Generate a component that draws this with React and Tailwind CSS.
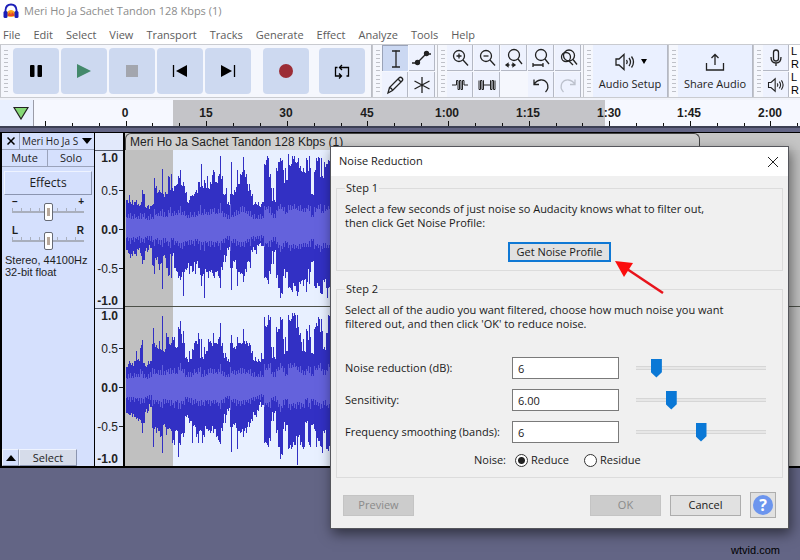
import { useState } from "react";

const MENUS = [
  "File",
  "Edit",
  "Select",
  "View",
  "Transport",
  "Tracks",
  "Generate",
  "Effect",
  "Analyze",
  "Tools",
  "Help",
];

// peak heights, one value for every two pixels
const LEFT_UP = [
  28, 33, 26, 28, 26, 28, 24, 26, 38, 34, 22, 23, 22, 24, 50, 42, 38, 36, 59,
  36, 34, 52, 54, 40, 42, 44, 52, 58, 46, 42, 36, 28, 32, 33, 36, 38, 46, 64,
  42, 48, 52, 40, 46, 58, 56, 46, 54, 72, 52, 34, 40, 26, 66, 34, 38, 58, 44,
  54, 71, 58, 54, 44, 38, 34, 26, 24, 26, 24, 26, 64, 72, 70, 54, 40, 28, 60,
  66, 70, 68, 60, 48, 74, 64, 72, 72, 66, 70, 62, 60, 56, 70, 72, 60, 34, 58,
  70, 71, 70, 52, 66, 64, 68, 70,
];
const LEFT_DOWN = [
  22, 26, 30, 28, 26, 28, 22, 28, 36, 32, 24, 22, 20, 38, 46, 32, 42, 36, 61,
  30, 40, 48, 50, 28, 40, 44, 50, 52, 68, 44, 42, 46, 38, 44, 46, 36, 40, 58,
  48, 70, 44, 50, 44, 48, 50, 44, 50, 60, 42, 34, 28, 22, 62, 40, 34, 58, 44,
  46, 54, 48, 44, 34, 40, 24, 22, 26, 18, 18, 18, 50, 52, 56, 46, 36, 24, 50,
  60, 70, 66, 50, 44, 60, 62, 64, 58, 68, 64, 56, 58, 52, 64, 56, 44, 34, 60,
  60, 58, 66, 66, 54, 70, 60, 62,
];
const RIGHT_UP = [
  20, 26, 24, 24, 26, 36, 28, 42, 47, 24, 22, 26, 26, 59, 44, 42, 46, 38, 71,
  38, 54, 50, 44, 50, 50, 40, 60, 66, 56, 44, 30, 36, 28, 38, 46, 46, 54, 48,
  30, 40, 36, 48, 46, 54, 44, 44, 50, 64, 44, 34, 30, 28, 52, 44, 40, 50, 44,
  44, 58, 46, 46, 44, 42, 36, 30, 26, 28, 34, 28, 70, 62, 72, 70, 40, 30, 60,
  58, 70, 68, 50, 36, 72, 68, 74, 74, 72, 60, 54, 48, 36, 58, 62, 50, 34, 60,
  64, 70, 68, 56, 40, 54, 72, 72,
];
const RIGHT_DOWN = [
  26, 28, 28, 30, 30, 32, 34, 36, 46, 36, 26, 24, 20, 60, 42, 46, 44, 50, 66,
  40, 48, 42, 44, 56, 58, 44, 70, 58, 50, 46, 30, 36, 34, 56, 40, 50, 56, 44,
  56, 50, 42, 44, 46, 46, 42, 50, 55, 57, 44, 36, 28, 24, 65, 40, 38, 62, 44,
  46, 50, 44, 46, 40, 36, 34, 28, 30, 24, 20, 18, 56, 58, 60, 54, 34, 26, 46,
  60, 72, 68, 44, 38, 62, 62, 60, 58, 78, 50, 58, 62, 60, 36, 58, 60, 38, 44,
  60, 54, 60, 66, 46, 62, 64, 60,
];

const RULER_LABELS = ["0", "15", "30", "45", "1:00", "1:15", "1:30", "1:45", "2:00"];

// splits every value into a one pixel peak and a one pixel shoulder
function columns(values, inner) {
  return values.flatMap((v, i) => {
    const next = values[i + 1] ?? v;
    const shoulder = Math.min(v, next) - ((i * 5) % 4);
    if (inner) {
      return [
        Math.round(5 + v * 0.22 + ((i * 7) % 5)),
        Math.round(4 + shoulder * 0.22),
      ];
    }
    return i % 3 === 1 ? [shoulder, v] : [v, shoulder];
  });
}

function wavePath(up, down, mid, inner) {
  const top = columns(up, inner);
  const bottom = columns(down, inner);
  let d = `M1 ${mid}`;
  top.forEach((v) => {
    d += `V${mid - v}h1`;
  });
  for (let i = bottom.length - 1; i >= 0; i--) {
    d += `V${mid + bottom[i]}h-1`;
  }
  return d + "Z";
}

function Icon({ children, className = "size-6" }) {
  return (
    <svg
      viewBox="0 0 24 24"
      className={className}
      fill="none"
      stroke="currentColor"
      strokeWidth="1.3"
      aria-hidden="true"
    >
      {children}
    </svg>
  );
}

function Grip() {
  return (
    <div className="flex w-2.5 shrink-0 flex-col items-center justify-evenly border-l border-[#c4c6cc] py-0.5">
      {Array.from({ length: 11 }, (_, i) => (
        <span key={i} className="h-px w-1 bg-[#bfc1c8]" />
      ))}
    </div>
  );
}

function TransportButton({ label, children }) {
  return (
    <button
      type="button"
      aria-label={label}
      className="flex size-[46px] shrink-0 items-center justify-center rounded-sm bg-[#cdd9f0] text-black"
    >
      {children}
    </button>
  );
}

function ToolButton({ label, active, children }) {
  return (
    <button
      type="button"
      aria-label={label}
      className={
        active
          ? "flex size-[26px] items-center justify-center border-t border-l border-[#9aa3b8] bg-[#cbd8f2] text-[#222]"
          : "flex size-[26px] items-center justify-center border-r border-b border-[#b4b8c4] bg-[#eef2fe] text-[#222]"
      }
    >
      {children}
    </button>
  );
}

const MAGNIFIER = (
  <>
    <circle cx="11" cy="10" r="5.5" />
    <path d="M15 14l5 5.500" />
  </>
);

function SpeakerShape() {
  return (
    <>
      <path d="M3 9h3l5-4.500v15L6 15H3z" />
      <path d="M13.500 10q1.500 2 0 4M16 8q3 4 0 8M18.500 6.500q4 5.500 0 11" />
    </>
  );
}

function Toolbar() {
  return (
    <div className="flex h-[54px] overflow-hidden border-t border-b border-[#c9cbd0] bg-[#f5f7fd]">
      <Grip />
      <div className="flex shrink-0 items-center gap-0.5 border-r border-[#b9bcc4] pr-1.5 pl-[3px]">
        <TransportButton label="Pause">
          <Icon>
            <rect x="6" y="6" width="4.500" height="12" rx="1" fill="currentColor" stroke="none" />
            <rect x="13.500" y="6" width="4.500" height="12" rx="1" fill="currentColor" stroke="none" />
          </Icon>
        </TransportButton>
        <TransportButton label="Play">
          <Icon>
            <path d="M5 5l14 7-14 7z" fill="#43896b" stroke="none" />
          </Icon>
        </TransportButton>
        <TransportButton label="Stop">
          <Icon>
            <path d="M6 6h12v12H6z" fill="#a3a6ae" stroke="none" />
          </Icon>
        </TransportButton>
        <TransportButton label="Skip to Start">
          <Icon>
            <path d="M19 6v12L8 12z" fill="currentColor" stroke="none" />
            <path d="M5.500 6v12" />
          </Icon>
        </TransportButton>
        <TransportButton label="Skip to End">
          <Icon>
            <path d="M5 6v12l11-6z" fill="currentColor" stroke="none" />
            <path d="M18.500 6v12" />
          </Icon>
        </TransportButton>
        <span className="w-2" />
        <TransportButton label="Record">
          <Icon>
            <circle cx="12" cy="12" r="7" fill="#9c2d36" stroke="none" />
          </Icon>
        </TransportButton>
        <span className="w-1.5" />
        <TransportButton label="Enable Looping">
          <Icon>
            <path d="M7.500 8.500h-2v8.500h6M9 14.500l2.500 2.500L9 19.500M16.500 17h2V8.500H9.500M12 6L9.500 8.500 12 11" />
          </Icon>
        </TransportButton>
      </div>
      <Grip />
      <div className="grid shrink-0 grid-cols-2 gap-px pr-0.5">
        <ToolButton label="Selection Tool" active>
          <Icon>
            <path d="M8 4h3.500l.5.5.5-.5H16M12 4.500v15M8 20h3.500l.5-.5.5.5H16" />
          </Icon>
        </ToolButton>
        <ToolButton label="Envelope Tool">
          <Icon>
            <path d="M2 17h5l9-9h5" />
            <circle cx="7.500" cy="16.500" r="2" fill="currentColor" />
            <circle cx="16.500" cy="7.500" r="2" fill="currentColor" />
          </Icon>
        </ToolButton>
        <ToolButton label="Draw Tool">
          <Icon>
            <path d="M5 20l1.500-5.500L16 5q1.500-1.500 3 0t0 3L9.500 17.500zM6.500 14.500q2.500.5 3 3M15 6l3 3" />
          </Icon>
        </ToolButton>
        <ToolButton label="Multi-Tool">
          <Icon>
            <path d="M12 4v16M4.500 8l15 8M4.500 16l15-8" />
          </Icon>
        </ToolButton>
      </div>
      <Grip />
      <div className="grid shrink-0 grid-cols-5 gap-px pr-0.5">
        <ToolButton label="Zoom In">
          <Icon>
            {MAGNIFIER}
            <path d="M11 7.500v5M8.500 10h5" />
          </Icon>
        </ToolButton>
        <ToolButton label="Zoom Out">
          <Icon>
            {MAGNIFIER}
            <path d="M8.500 10h5" />
          </Icon>
        </ToolButton>
        <ToolButton label="Fit Selection to Width">
          <Icon>
            <circle cx="12" cy="9" r="5.500" />
            <path d="M16 13l4 5M4 19h3.500M9.500 19H13M6 17.500L4 19l2 1.500zM11 17.500l2 1.500-2 1.500z" />
          </Icon>
        </ToolButton>
        <ToolButton label="Fit Project to Width">
          <Icon>
            <circle cx="12" cy="9" r="5.500" />
            <path d="M16 13l4 5M4 19h10M4 17v4M14 17v4" />
          </Icon>
        </ToolButton>
        <ToolButton label="Zoom Toggle">
          <Icon>
            <circle cx="13" cy="9.500" r="5.500" />
            <circle cx="10" cy="11" r="4.500" />
            <path d="M13 15l4 4M17 13.500l4 5" />
          </Icon>
        </ToolButton>
        <ToolButton label="Trim Audio">
          <Icon>
            <path strokeWidth="1" d="M4 12h4.500V7.500h1.500v9h1.500v-9h1.500v9h1.500v-9h1.500V12H20" />
          </Icon>
        </ToolButton>
        <ToolButton label="Silence Audio">
          <Icon>
            <path strokeWidth="1" d="M4 7.500v9h1.500v-9H7v9h1.500v-9V12h7V7.500v9H17v-9h1.500v9H20v-9" />
          </Icon>
        </ToolButton>
        <span />
        <ToolButton label="Undo">
          <Icon>
            <path d="M5 6.500v5h5M5 11.500C8 6 15 5.500 18 10q2.500 5-1.500 9" />
          </Icon>
        </ToolButton>
        <button
          type="button"
          disabled
          aria-label="Redo"
          className="flex size-[26px] items-center justify-center border-r border-b border-[#b4b8c4] bg-[#eef2fe] text-[#bcc1cc]"
        >
          <Icon>
            <path d="M19 6.500v5h-5M19 11.500C16 6 9 5.500 6 10q-2.500 5 1.500 9" />
          </Icon>
        </button>
      </div>
      <Grip />
      <button
        type="button"
        className="flex w-[75px] shrink-0 flex-col items-center justify-center gap-0.5 border-r border-[#b4b8c4] bg-[#eaf0ff] text-[#222]"
      >
        <span className="flex items-center gap-1">
          <Icon>
            <SpeakerShape />
          </Icon>
          <svg viewBox="0 0 6 5" className="h-[5px] w-1.5" aria-hidden="true">
            <path d="M0 0h6L3 5z" />
          </svg>
        </span>
        Audio Setup
      </button>
      <Grip />
      <button
        type="button"
        className="flex w-[75px] shrink-0 flex-col items-center justify-center gap-0.5 border-r border-[#b4b8c4] bg-[#eaf0ff] text-[#222]"
      >
        <Icon>
          <path d="M3.500 13v7h17v-7M12 15V4.500M8.500 8L12 4.500 15.500 8" />
        </Icon>
        Share Audio
      </button>
      <Grip />
      <div className="grid shrink-0 gap-px">
        <ToolButton label="Record Meter">
          <Icon>
            <rect x="9.500" y="4" width="5" height="11" rx="2.500" />
            <path d="M7 11q0 6 5 6t5-6M12 17v3" />
          </Icon>
        </ToolButton>
        <ToolButton label="Playback Meter">
          <Icon className="size-5">
            <SpeakerShape />
          </Icon>
        </ToolButton>
      </div>
      <div className="flex flex-1 flex-col justify-between bg-white pl-0.5 font-['Liberation_Sans',sans-serif] leading-[13px]">
        <span>L</span>
        <span>R</span>
        <span>L</span>
        <span>R</span>
      </div>
    </div>
  );
}

function TimeRuler() {
  return (
    <div className="mt-0.5 flex h-7 border-b-2 border-[#3c4054] bg-[#f6f8ff]">
      <div className="flex w-[34px] shrink-0 items-center justify-end border-r border-[#9a9ca8] bg-[#e9f0ff] pr-1">
        <svg viewBox="0 0 16 14" className="h-3.5 w-4" aria-hidden="true">
          <path d="M1 1.500h14L8 13z" fill="#85d977" stroke="#222" strokeWidth="1.2" />
        </svg>
      </div>
      <svg className="h-full min-w-0 flex-1" aria-label="Timeline">
        <rect x="139" y="0" width="432" height="27" fill="#c4c4c8" />
        {Array.from({ length: 32 }, (_, i) => (
          <path
            key={i}
            d={`M${Math.round(11 + i * 26.87) + 0.5} ${i % 3 === 0 ? 21 : 23}V27`}
            stroke="#111"
          />
        ))}
        {RULER_LABELS.map((label, i) => (
          <text
            key={label}
            x={Math.round(91 + i * 80.6)}
            y="17"
            textAnchor="middle"
            className="fill-[#1c1c1c] font-['Liberation_Sans',sans-serif] text-xs font-bold"
          >
            {label}
          </text>
        ))}
      </svg>
    </div>
  );
}

function TrackSlider({ label, low, high }) {
  return (
    <div className="px-2.5">
      <div className="flex h-2.5 justify-between font-['Liberation_Sans',sans-serif] text-[10px] leading-[10px] font-bold">
        <span>{low}</span>
        <span>{high}</span>
      </div>
      <input
        type="range"
        aria-label={label}
        min="-36"
        max="36"
        defaultValue="0"
        className="-mt-1 block h-[18px] w-full appearance-none bg-[linear-gradient(#a9afbd,#a9afbd),repeating-linear-gradient(90deg,#a9afbd_0_1px,transparent_1px_9px)] bg-[length:100%_2px,100%_5px] bg-[position:0_8px,0_5px] bg-no-repeat [&::-webkit-slider-thumb]:h-[18px] [&::-webkit-slider-thumb]:w-[9px] [&::-webkit-slider-thumb]:appearance-none [&::-webkit-slider-thumb]:rounded-xs [&::-webkit-slider-thumb]:border [&::-webkit-slider-thumb]:border-[#666a75] [&::-webkit-slider-thumb]:bg-[linear-gradient(#b9a99c,#b9a99c)] [&::-webkit-slider-thumb]:bg-[length:3px_8px] [&::-webkit-slider-thumb]:bg-center [&::-webkit-slider-thumb]:bg-no-repeat [&::-webkit-slider-thumb]:bg-white"
      />
    </div>
  );
}

function TrackPanel() {
  return (
    <div className="flex w-[92px] shrink-0 flex-col bg-[#d5e0fd] text-[#1d1d1d]">
      <div className="flex h-[17px] items-center border-b border-[#9aa3bb]">
        <button type="button" aria-label="Close track" className="flex h-full w-[18px] items-center justify-center border-r border-[#9aa3bb]">
          <svg viewBox="0 0 8 8" className="size-2" aria-hidden="true">
            <path d="M.5.5l7 7M7.500.5l-7 7" stroke="#000" strokeWidth="1.500" />
          </svg>
        </button>
        <button type="button" className="flex flex-1 items-center justify-between px-0.5 text-[10px] whitespace-nowrap">
          Meri Ho Ja S
          <svg viewBox="0 0 10 6" className="h-1.5 w-2.5" aria-hidden="true">
            <path d="M0 0h10L5 6z" />
          </svg>
        </button>
      </div>
      <div className="grid h-[17px] grid-cols-2 border-b border-[#9aa3bb]">
        <button type="button" className="border-r border-[#9aa3bb]">Mute</button>
        <button type="button">Solo</button>
      </div>
      <button
        type="button"
        className="mx-0.5 mt-1 h-6 border border-t-[#eef3ff] border-r-[#8b95b0] border-b-[#8b95b0] border-l-[#eef3ff] text-xs"
      >
        Effects
      </button>
      <div className="mt-0.5 space-y-[5px]">
        <TrackSlider label="Gain" low="–" high="+" />
        <TrackSlider label="Pan" low="L" high="R" />
      </div>
      <p className="mt-1 pl-[3px] font-['Liberation_Sans',sans-serif] text-[11px] leading-3 whitespace-nowrap">
        Stereo, 44100Hz
        <br />
        32-bit float
      </p>
      <div className="mt-auto flex h-[17px] text-[11px]">
        <button type="button" aria-label="Collapse track" className="flex w-[17px] items-center justify-center border border-t-[#eef3ff] border-r-[#9aa3bb] border-b-[#9aa3bb] border-l-[#eef3ff]">
          <svg viewBox="0 0 10 6" className="h-1.5 w-2.5" aria-hidden="true">
            <path d="M0 6h10L5 0z" />
          </svg>
        </button>
        <button type="button" className="w-[58px] border border-t-[#eef3ff] border-r-[#8b95b0] border-b-[#8b95b0] border-l-[#eef3ff] bg-[#d6dcea] leading-[15px]">
          Select
        </button>
      </div>
    </div>
  );
}

function ScaleMark({ children }) {
  return (
    <span className="flex flex-1 items-center justify-end gap-px">
      {children}
      <i className="h-px w-1 bg-[#222]" />
    </span>
  );
}

function ScaleColumn() {
  return (
    <div className="flex h-[158px] flex-col border-t border-[#555b6b] font-['Liberation_Sans',sans-serif] text-xs leading-[14px] text-[#222]">
      <span className="flex h-5 justify-end pr-[5px] font-bold">1.0</span>
      <ScaleMark>0.5</ScaleMark>
      <ScaleMark>
        <b>0.0</b>
      </ScaleMark>
      <ScaleMark>-0.5</ScaleMark>
      <span className="flex h-5 items-end justify-end pr-[5px] font-bold">-1.0</span>
    </div>
  );
}

function Waveform() {
  return (
    <svg className="h-[316px] w-full" shapeRendering="crispEdges" aria-label="Waveform">
      <rect width="100%" height="316" fill="#c0c0c0" />
      <rect x="48" width="527" height="316" fill="#e8f0ff" />
      <path d={wavePath(LEFT_UP, LEFT_DOWN, 78)} fill="#3230c4" />
      <path d={wavePath(LEFT_UP, LEFT_DOWN, 78, true)} fill="#6462dc" />
      <path d={wavePath(RIGHT_UP, RIGHT_DOWN, 237)} fill="#3230c4" />
      <path d={wavePath(RIGHT_UP, RIGHT_DOWN, 237, true)} fill="#6462dc" />
      <rect y="156" width="100%" height="1" fill="#4d5149" />
    </svg>
  );
}

function Track() {
  return (
    <section className="mt-1 flex h-[336px] border-t border-b-2 border-l-2 border-black bg-[#c6c6c6]">
      <TrackPanel />
      <div className="flex w-[31px] shrink-0 flex-col border-r-2 border-l border-black bg-[#e2e9fb] pt-[17px]">
        <ScaleColumn />
        <ScaleColumn />
      </div>
      <div className="min-w-0 flex-1">
        <div className="h-[17px] w-[575px] rounded-t-md border border-b-0 border-[#444] bg-[#cfcfcf] pl-1 font-['Liberation_Sans',sans-serif] text-xs leading-4 text-[#222]">
          Meri Ho Ja Sachet Tandon 128 Kbps (1)
        </div>
        <Waveform />
      </div>
    </section>
  );
}

function SettingRow({ id, label, max, step, value, onChange }) {
  return (
    <div className="flex items-center">
      <label htmlFor={id} className="w-[167px]">
        {label}
      </label>
      <input
        id={id}
        type="text"
        value={value}
        onChange={(e) => onChange(e.target.value)}
        className="h-[22px] w-[107px] border border-[#7a7a7a] bg-white px-[5px] outline-none"
      />
      <input
        type="range"
        aria-label={label}
        min="0"
        max={max}
        step={step}
        value={value}
        onChange={(e) => onChange(e.target.value)}
        className="ml-[17px] h-5 w-[130px] appearance-none bg-[linear-gradient(#d6d6d6_1px,#e7e7e7_1px_3px,#d6d6d6_3px)] bg-[length:100%_4px] bg-center bg-no-repeat [&::-webkit-slider-thumb]:h-[19px] [&::-webkit-slider-thumb]:w-[11px] [&::-webkit-slider-thumb]:appearance-none [&::-webkit-slider-thumb]:bg-[#0a78d6] [&::-webkit-slider-thumb]:[clip-path:polygon(0_0,100%_0,100%_72%,50%_100%,0_72%)]"
      />
    </div>
  );
}

function NoiseReductionDialog() {
  const [settings, setSettings] = useState({
    reduction: "6",
    sensitivity: "6.00",
    bands: "6",
    noise: "reduce",
  });

  const update = (key) => (value) =>
    setSettings((prev) => ({ ...prev, [key]: value }));

  const radioClass =
    "size-[13px] appearance-none rounded-full border border-[#333] bg-white checked:bg-[radial-gradient(circle,#222_3px,#fff_4px)]";

  return (
    <div
      role="dialog"
      aria-labelledby="dialog-title"
      className="absolute top-[146px] left-[330px] w-[459px] border border-[#55565c] bg-[#f0f0f0] text-[#1a1a1a] shadow-[2px_5px_12px_rgba(0,0,0,0.5)]"
    >
      <div className="flex h-[29px] items-center justify-between bg-white pr-2.5 pl-2">
        <h1 id="dialog-title">Noise Reduction</h1>
        <button type="button" aria-label="Close">
          <svg viewBox="0 0 10 10" className="size-2.5" aria-hidden="true">
            <path d="M0 0l10 10M10 0L0 10" stroke="#222" />
          </svg>
        </button>
      </div>

      <form className="px-[5px] pt-1" onSubmit={(e) => e.preventDefault()}>
        <fieldset className="border border-[#dcdcdc] px-2 pb-2">
          <legend className="px-px leading-4">Step 1</legend>
          <p className="mt-1.5 leading-[14px]">
            Select a few seconds of just noise so Audacity knows what to filter out,
            <br />
            then click Get Noise Profile:
          </p>
          <button
            type="button"
            className="mx-auto mt-3 block h-5 w-[103px] border-2 border-[#0f78d4] bg-[#e1e1e1] leading-4"
          >
            Get Noise Profile
          </button>
        </fieldset>

        <fieldset className="mt-2.5 border border-[#dcdcdc] px-2 pb-2.5">
          <legend className="px-px leading-4">Step 2</legend>
          <p className="mt-1.5 leading-[14px]">
            Select all of the audio you want filtered, choose how much noise you want
            <br />
            filtered out, and then click 'OK' to reduce noise.
          </p>
          <div className="mt-[26px] space-y-2.5">
            <SettingRow
              id="reduction"
              label="Noise reduction (dB):"
              max="48"
              step="1"
              value={settings.reduction}
              onChange={update("reduction")}
            />
            <SettingRow
              id="sensitivity"
              label="Sensitivity:"
              max="24"
              step="0.01"
              value={settings.sensitivity}
              onChange={update("sensitivity")}
            />
            <SettingRow
              id="bands"
              label="Frequency smoothing (bands):"
              max="12"
              step="1"
              value={settings.bands}
              onChange={update("bands")}
            />
          </div>
          <div className="mt-2.5 flex h-3.5 items-center pl-[129px]" role="radiogroup" aria-label="Noise">
            <span className="w-[41px]">Noise:</span>
            <label className="flex w-[69px] items-center gap-[3px]">
              <input
                type="radio"
                name="noise"
                className={radioClass}
                checked={settings.noise === "reduce"}
                onChange={() => update("noise")("reduce")}
              />
              Reduce
            </label>
            <label className="flex items-center gap-[3px]">
              <input
                type="radio"
                name="noise"
                className={radioClass}
                checked={settings.noise === "residue"}
                onChange={() => update("noise")("residue")}
              />
              Residue
            </label>
          </div>
        </fieldset>

        <div className="mt-3.5 mb-2.5 flex items-center gap-[9px] px-[7px]">
          <button type="button" disabled className="mr-auto h-[21px] w-[71px] border border-[#c4c4c4] bg-[#cccccc] text-[#8a8a8a]">
            Preview
          </button>
          <button type="submit" disabled className="h-[21px] w-[71px] border border-[#c4c4c4] bg-[#cccccc] text-[#8a8a8a]">
            OK
          </button>
          <button type="button" className="h-[21px] w-[71px] border border-[#adadad] bg-[#e1e1e1]">
            Cancel
          </button>
          <button
            type="button"
            aria-label="Help"
            className="flex size-[26px] items-center justify-center border border-[#adadad] bg-[#e1e1e1]"
          >
            <span className="flex size-5 items-center justify-center rounded-full bg-[#6c95ee] text-base leading-5 font-bold text-white">
              ?
            </span>
          </button>
        </div>
      </form>

      <svg viewBox="0 0 50 34" className="absolute top-[113px] left-[284px] h-[34px] w-[50px]" aria-hidden="true">
        <path d="M12 9l36 24" stroke="#e8141c" strokeWidth="2.500" />
        <path d="M0 1l18 2-9 14z" fill="#fb0d0d" />
      </svg>
    </div>
  );
}

export default function App() {
  return (
    <div className="relative flex min-h-screen flex-col overflow-hidden bg-[#636585] font-['Open_Sans','Noto_Sans',sans-serif] text-[11px]">
      <header className="bg-white">
        <div className="flex h-[22px] items-center gap-[5px] pl-[3px] text-[#8c8c8c]">
          <svg viewBox="0 0 16 16" className="size-4" aria-hidden="true">
            <path d="M4 9q4-4 8 0v4q-4 2-8 0z" fill="#f7a51c" />
            <path d="M5 11l2-2 1 3 1-3 2 2v2H5z" fill="#e8452a" />
            <path d="M2.500 10V7q.5-5.500 5.500-5.500T13.500 7v3" fill="none" stroke="#1c1fb8" strokeWidth="1.800" />
            <rect x=".5" y="8" width="4" height="7" rx="1.500" fill="#1c1fb8" />
            <rect x="11.500" y="8" width="4" height="7" rx="1.500" fill="#1c1fb8" />
          </svg>
          <span>Meri Ho Ja Sachet Tandon 128 Kbps (1)</span>
        </div>
        <nav className="flex h-[22px] items-center gap-[13px] pt-1 pl-[3px] text-[#5c5c5c]">
          {MENUS.map((menu) => (
            <button key={menu} type="button">
              {menu}
            </button>
          ))}
        </nav>
      </header>
      <div className="bg-[#f1f3fa]">
        <Toolbar />
        <TimeRuler />
      </div>
      <Track />
      <footer className="mt-auto pr-5 pb-1 text-right font-['Liberation_Sans',sans-serif] text-[11px] leading-3 text-black">
        wtvid.com
      </footer>
      <NoiseReductionDialog />
    </div>
  );
}
